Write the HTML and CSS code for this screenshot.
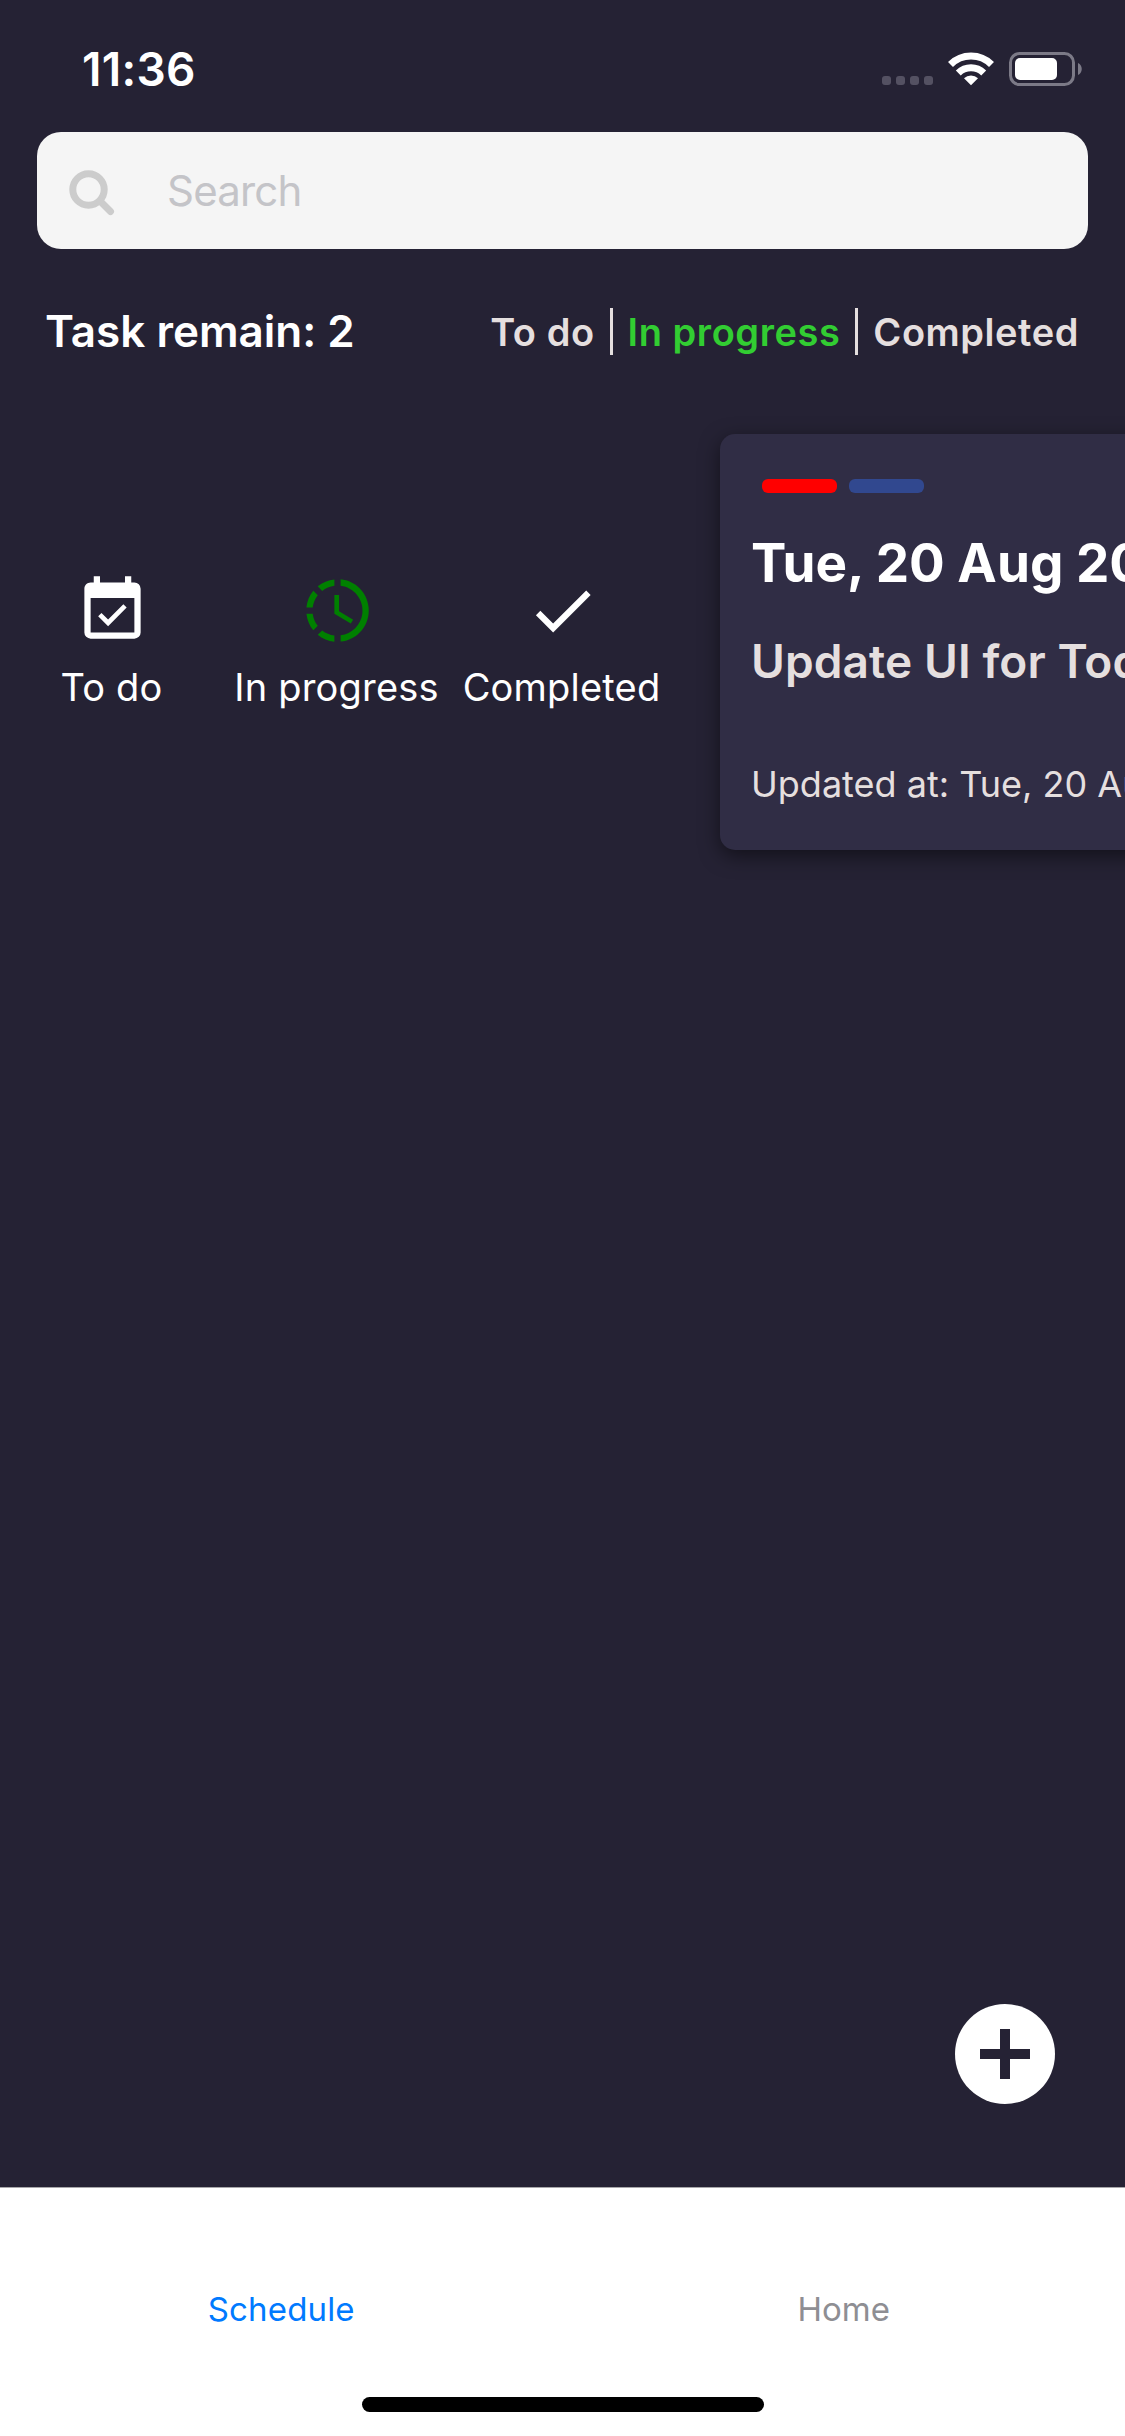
FILE: index.html
```html
<!DOCTYPE html>
<html lang="en">
<head>
<meta charset="utf-8">
<title>Schedule</title>
<link rel="stylesheet" href="styles.css">
</head>
<body>
<div class="screen">
  <header class="status-bar">
    <span class="time">11:36</span>
    <svg class="status-icons" width="202" height="40" viewBox="0 0 202 40">
      <g fill="#545162">
        <rect x="0" y="27" width="9" height="9" rx="3"/>
        <rect x="14" y="27" width="9" height="9" rx="3"/>
        <rect x="28" y="27" width="9" height="9" rx="3"/>
        <rect x="42" y="27" width="9" height="9" rx="3"/>
      </g>
      <g fill="none" stroke="#fff" stroke-width="7">
        <path d="M68.5 15.5a29 29 0 0 1 41 0"/>
        <path d="M76.3 24a18.2 18.2 0 0 1 25.400 0"/>
      </g>
      <path d="M82 29.300a10 10 0 0 1 14 0L89 36.300z" fill="#fff"/>
      <rect x="128.500" y="4.500" width="63" height="31" rx="9" fill="none" stroke="#7c7a87" stroke-width="3"/>
      <rect x="133" y="9" width="42" height="22" rx="5" fill="#fff"/>
      <path d="M196 14c5 2 5 10 0 12z" fill="#7c7a87"/>
    </svg>
  </header>

  <div class="search">
    <svg class="search-icon" width="46" height="46" viewBox="0 0 46 46" fill="none" stroke="#ccc">
      <circle cx="19.500" cy="19.500" r="15.700" stroke-width="7"/>
      <path d="M31 31L41.500 41.500" stroke-width="7" stroke-linecap="round"/>
    </svg>
    <span class="placeholder">Search</span>
  </div>

  <div class="summary">
    <h1 class="remain">Task remain: 2</h1>
    <nav class="filters">
      <span class="filter">To do</span>
      <span class="filter active">In progress</span>
      <span class="filter">Completed</span>
    </nav>
  </div>

  <main class="task-row">
    <div class="actions">
      <div class="action">
        <svg width="75" height="75" viewBox="0 0 24 24" fill="#fff"><path d="M19,19H5V8H19M19,3H18V1H16V3H8V1H6V3H5C3.890,3 3,3.900 3,5V19A2,2 0 0,0 5,21H19A2,2 0 0,0 21,19V5A2,2 0 0,0 19,3M16.530,11.060L15.470,10L10.590,14.880L8.470,12.760L7.410,13.820L10.590,17L16.530,11.060Z"/></svg>
        <span class="action-label">To do</span>
      </div>
      <div class="action">
        <svg width="75" height="75" viewBox="0 0 24 24" fill="green"><path d="M13,2.030V4.050C17.390,4.590 20.500,8.580 19.960,12.970C19.500,16.610 16.640,19.500 13,19.930V21.930C18.500,21.380 22.500,16.500 21.950,11C21.500,6.250 17.730,2.500 13,2.030M11,2.060C9.050,2.250 7.190,3 5.670,4.260L7.100,5.740C8.220,4.840 9.570,4.260 11,4.060V2.060M4.260,5.670C3,7.190 2.250,9.040 2.050,11H4.050C4.240,9.580 4.800,8.230 5.690,7.100L4.260,5.670M2.060,13C2.260,14.960 3.030,16.810 4.270,18.330L5.690,16.900C4.810,15.770 4.240,14.420 4.060,13H2.060M7.100,18.370L5.670,19.740C7.180,21 9.040,21.790 11,22V20C9.580,19.820 8.230,19.250 7.100,18.370M12.500,7V12.250L17,14.920L16.250,16.150L11,13V7H12.500Z"/></svg>
        <span class="action-label">In progress</span>
      </div>
      <div class="action">
        <svg width="75" height="75" viewBox="0 0 24 24" fill="#fff"><path d="M21,7L9,19L3.500,13.500L4.910,12.090L9,16.170L19.590,5.590L21,7Z"/></svg>
        <span class="action-label">Completed</span>
      </div>
    </div>
    <article class="card">
      <div class="tags"><span class="tag red"></span><span class="tag blue"></span></div>
      <h2 class="card-date">Tue, 20 Aug 2024</h2>
      <p class="card-title">Update UI for Todo</p>
      <p class="card-updated">Updated at: Tue, 20 Aug 2024</p>
    </article>
  </main>

  <div class="fab-row">
    <svg class="fab" width="100" height="100" viewBox="0 0 100 100"><circle cx="50" cy="50" r="50" fill="#fff"/><path d="M45 25h10v20h20v10H55v20H45V55H25V45h20z" fill="#252234"/></svg>
  </div>

  <footer class="tab-bar">
    <div class="tabs">
      <span class="tab selected">Schedule</span>
      <span class="tab">Home</span>
    </div>
    <div class="home-indicator"></div>
  </footer>
</div>
</body>
</html>
```
FILE: styles.css
```css
* { box-sizing: border-box; }
body { margin: 0; background: #252234; font-family: Inter, "Liberation Sans", sans-serif; }
h1, h2, p { margin: 0; }
svg { display: block; flex: none; }

.screen { width: 1125px; height: 2436px; display: flex; flex-direction: column; overflow: hidden; background: #252234; color: #fff; white-space: nowrap; }

.status-bar { height: 132px; padding: 49px 41px 0 82px; display: flex; justify-content: space-between; }
.time { font-size: 46px; line-height: 40px; font-weight: 600; letter-spacing: 0.3px; }

.search { height: 117px; margin: 0 37px; padding: 0 32px; border-radius: 24px; background: #f5f5f5; display: flex; align-items: center; gap: 52px; }
.search-icon { margin-top: 4px; }
.placeholder { font-size: 42px; line-height: 50px; letter-spacing: -0.8px; color: #c4c4c8; }

.summary { height: 165px; padding: 0 46px 0 45px; display: flex; justify-content: space-between; align-items: center; }
.remain { padding-bottom: 2px; font-size: 44px; line-height: 54px; font-weight: 600; }
.filters { display: flex; align-items: center; font-size: 38px; font-weight: 600; line-height: 47px; letter-spacing: 0.55px; color: #e5dfdf; }
.filter { height: 47px; line-height: 49px; }
.filter + .filter { margin-left: 15px; padding-left: 15px; border-left: 3px solid #e5dfdf; }
.filters .active { color: #32cd32; }

.task-row { display: flex; margin-top: 20px; height: 416px; }
.actions { display: flex; width: 720px; flex: none; padding-top: 139px; }
.action { width: 225px; display: flex; flex-direction: column; align-items: center; gap: 16px; }
.action-label { padding-right: 2px; font-size: 38px; line-height: 46px; letter-spacing: 0.2px; }

.card { width: 645px; flex: none; padding: 45px 30px 0 31px; border-radius: 15px; background: #302d45; box-shadow: 0 6px 20px rgba(0, 0, 0, 0.5); }
.tags { display: flex; gap: 12px; padding-left: 11px; }
.tag { width: 75px; height: 14px; border-radius: 6px; }
.red { background: #f00; }
.blue { background: #31488f; }
.card-date { margin-top: 38px; font-size: 53px; line-height: 64px; font-weight: 700; }
.card-title { margin-top: 38px; font-size: 46px; line-height: 56px; font-weight: 600; letter-spacing: 0.1px; color: #e5dfdf; }
.card-updated { margin-top: 73px; font-size: 36px; line-height: 44px; color: #e5dfdf; }

.fab-row { margin-top: auto; padding: 0 70px 83px 0; display: flex; justify-content: flex-end; }

.tab-bar { height: 249px; border-top: 1px solid #a7a7aa; background: #fff; display: flex; flex-direction: column; align-items: center; }
.tabs { width: 100%; height: 209px; padding-top: 101px; display: flex; }
.tab { flex: 1; text-align: center; font-size: 33px; line-height: 40px; color: #8e8e93; }
.selected { color: #007aff; letter-spacing: 0.15px; }
.home-indicator { width: 402px; height: 15px; border-radius: 7.5px; background: #000; }
```
